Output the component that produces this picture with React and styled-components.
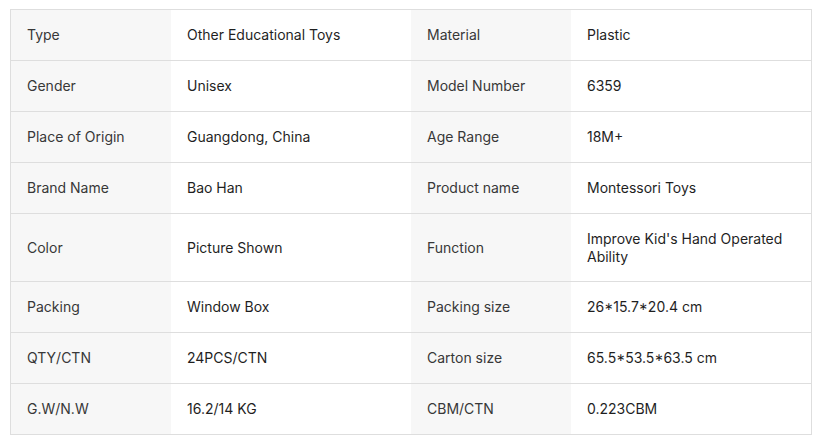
import styled, { createGlobalStyle } from "styled-components";

const GlobalStyle = createGlobalStyle`
  body {
    margin: 0;
    background: #fff;
    font-family: Inter, "Liberation Sans", sans-serif;
  }
`;

const Wrap = styled.div`
  padding: 9px 13px 0 10px;
`;

const Table = styled.div`
  width: 800px;
  border: 1px solid #dedede;
  display: grid;
  grid-template-columns: 160px 240px 160px 240px;
  font-size: 14px;
  line-height: 17.5px;
`;

const Cell = styled.div`
  min-height: ${(p) => (p.$last ? "50px" : "51px")};
  box-sizing: border-box;
  padding: 16px;
  display: flex;
  align-items: center;
  border-bottom: ${(p) => (p.$last ? "none" : "1px solid #dedede")};
  background: ${(p) => (p.$label ? "#f7f7f7" : "#fff")};
  color: ${(p) => (p.$label ? "#383838" : "#1f1f1f")};
`;

const rows = [
  ["Type", "Other Educational Toys", "Material", "Plastic"],
  ["Gender", "Unisex", "Model Number", "6359"],
  ["Place of Origin", "Guangdong, China", "Age Range", "18M+"],
  ["Brand Name", "Bao Han", "Product name", "Montessori Toys"],
  ["Color", "Picture Shown", "Function", "Improve Kid's Hand Operated Ability"],
  ["Packing", "Window Box", "Packing size", "26*15.7*20.4 cm"],
  ["QTY/CTN", "24PCS/CTN", "Carton size", "65.5*53.5*63.5 cm"],
  ["G.W/N.W", "16.2/14 KG", "CBM/CTN", "0.223CBM"],
];

export default function App() {
  return (
    <>
      <GlobalStyle />
      <Wrap>
        <Table>
          {rows.map((r, i) => {
            const last = i === rows.length - 1;
            return r.map((text, j) => (
              <Cell key={`${i}-${j}`} $label={j % 2 === 0} $last={last}>
                {text}
              </Cell>
            ));
          })}
        </Table>
      </Wrap>
    </>
  );
}
